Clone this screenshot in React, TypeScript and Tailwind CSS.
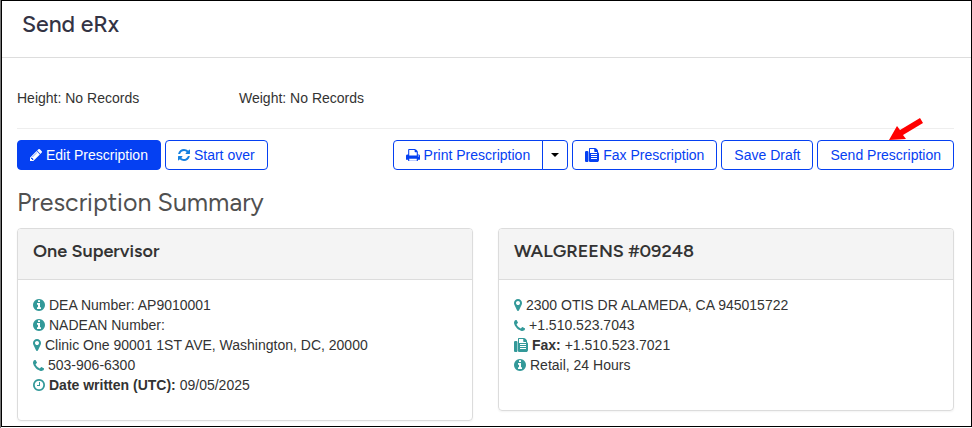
import React from "react";

const ICONS = {
  info: {
    box: "128 128 1536 1536",
    width: "w-3",
    path: "M1152 1376v-160q0-14-9-23t-23-9h-96v-512q0-14-9-23t-23-9h-320q-14 0-23 9t-9 23v160q0 14 9 23t23 9h96v320h-96q-14 0-23 9t-9 23v160q0 14 9 23t23 9h448q14 0 23-9t9-23zm-128-896v-160q0-14-9-23t-23-9h-192q-14 0-23 9t-9 23v160q0 14 9 23t23 9h192q14 0 23-9t9-23zm640 416q0 209-103 385.5t-279.5 279.5-385.5 103-385.5-103-279.5-279.5-103-385.5 103-385.5 279.5-279.5 385.5-103 385.5 103 279.5 279.5 103 385.5z",
  },
  marker: {
    box: "384 128 1024 1536",
    width: "w-2",
    path: "M1152 640q0-106-75-181t-181-75-181 75-75 181 75 181 181 75 181-75 75-181zm256 0q0 109-33 179l-364 774q-16 33-47.5 52t-67.5 19-67.5-19-46.5-52l-365-774q-33-70-33-179 0-212 150-362t362-150 362 150 150 362z",
  },
  phone: {
    box: "192 128 1408 1408",
    width: "w-[11px]",
    path: "M1600 1240q0 27-10 70.5t-21 68.5q-21 50-122 106-94 51-186 51-27 0-53-3.5t-57.5-12.5-47-14.5-55.5-20.5-49-18q-98-35-175-83-127-79-264-216t-216-264q-48-77-83-175-3-9-18-49t-20.5-55.5-14.5-47-12.5-57.5-3.5-53q0-92 51-186 56-101 106-122 25-11 68.5-21t70.5-10q14 0 21 3 18 6 53 76 11 19 30 54t35 63.5 31 53.5q3 4 17.5 25t21.5 35.5 7 28.5q0 20-28.5 50t-62 55-62 53-28.5 46q0 9 5 22.5t8.5 20.5 14 24 11.5 19q76 137 174 235t235 174q2 1 19 11.5t24 14 20.5 8.5 22.5 5q18 0 46-28.5t53-62 55-62 50-28.5q14 0 28.5 7t35.5 21.5 25 17.5q25 15 53.5 31t63.5 35 54 30q70 35 76 53 3 7 3 21z",
  },
  clock: {
    box: "128 128 1536 1536",
    width: "w-3",
    path: "M1024 544v448q0 14-9 23t-23 9h-320q-14 0-23-9t-9-23v-64q0-14 9-23t23-9h224v-352q0-14 9-23t23-9h64q14 0 23 9t9 23zm416 352q0-148-73-273t-198-198-273-73-273 73-198 198-73 273 73 273 198 198 273 73 273-73 198-198 73-273zm224 0q0 209-103 385.5t-279.5 279.5-385.5 103-385.5-103-279.5-279.5-103-385.5 103-385.5 279.5-279.5 385.5-103 385.5 103 279.5 279.5 103 385.5z",
  },
  pencil: {
    box: "128 149 1515 1515",
    width: "w-3",
    path: "M491 1536l91-91-235-235-91 91v107h128v128h107zm523-928q0-22-22-22-10 0-17 7l-542 542q-7 7-7 17 0 22 22 22 10 0 17-7l542-542q7-7 7-17zm-54-192l416 416-832 832h-416v-416zm683 96q0 53-37 90l-166 166-416-416 166-165q36-38 90-38 53 0 91 38l235 234q37 39 37 91z",
  },
  refresh: {
    box: "128 128 1536 1536",
    width: "w-3",
    path: "M1639 1056q0 5-1 7-64 268-268 434.5t-478 166.5q-146 0-282.5-55t-243.5-157l-129 129q-19 19-45 19t-45-19-19-45v-448q0-26 19-45t45-19h448q26 0 45 19t19 45-19 45l-137 137q71 66 161 102t187 36q134 0 250-65t186-179q11-17 53-117 8-23 30-23h192q13 0 22.5 9.5t9.5 22.5zm25-800v448q0 26-19 45t-45 19h-448q-26 0-45-19t-19-45 19-45l138-138q-148-137-349-137-134 0-250 65t-186 179q-11 17-53 117-8 23-30 23h-199q-13 0-22.5-9.5t-9.5-22.5v-7q65-268 270-434.5t480-166.5q146 0 284 55.5t245 156.5l130-129q19-19 45-19t45 19 19 45z",
  },
  print: {
    box: "64 128 1664 1536",
    width: "w-[14px]",
    path: "M448 1536h896v-256h-896v256zm0-640h896v-384h-160q-40 0-68-28t-28-68v-160h-640v640zm1152 64q0-26-19-45t-45-19-45 19-19 45 19 45 45 19 45-19 19-45zm128 0v416q0 13-9.5 22.5t-22.5 9.5h-224v160q0 40-28 68t-68 28h-960q-40 0-68-28t-28-68v-160h-224q-13 0-22.5-9.5t-9.5-22.5v-416q0-79 56.5-135.5t135.5-56.5h64v-544q0-40 28-68t68-28h672q40 0 88 20t76 48l152 152q28 28 48 76t20 88v256h64q79 0 135.5 56.5t56.5 135.5z",
  },
  fax: {
    box: "0 0 1792 1792",
    width: "w-[14px]",
    path: "M160 384h128q66 0 113 47t47 113v1088q0 66-47 113t-113 47h-128q-66 0-113-47t-47-113v-1088q0-66 47-113t113-47zM1664 547q58 34 93 93t35 128v768q0 106-75 181t-181 75h-864q-66 0-113-47t-47-113v-1536q0-40 28-68t68-28h672q40 0 88 20t76 48l152 152q28 28 48 76t20 88v163zM640 128v512h896v-128h-256q-40 0-68-28t-28-68v-288zM768 768v128h768v-128zM768 1024v128h768v-128zM768 1280v128h768v-128z",
  },
};

type IconName = keyof typeof ICONS;

function Icon({ name }: { name: IconName }) {
  const icon = ICONS[name];
  return (
    <svg
      viewBox={icon.box}
      fill="currentColor"
      fillRule={name === "fax" ? "evenodd" : "nonzero"}
      className={`${icon.width} shrink-0`}
      aria-hidden="true"
    >
      <path d={icon.path} />
    </svg>
  );
}

const BUTTON =
  "flex h-[30px] items-center gap-1 rounded border border-[#0540f2] px-3 text-sm whitespace-nowrap";

const OUTLINE = `${BUTTON} bg-white text-[#0540f2]`;

type Line = { icon: IconName; label?: string; text: string };

const SUPERVISOR: Line[] = [
  { icon: "info", text: "DEA Number: AP9010001" },
  { icon: "info", text: "NADEAN Number:" },
  { icon: "marker", text: "Clinic One 90001 1ST AVE, Washington, DC, 20000" },
  { icon: "phone", text: "503-906-6300" },
  { icon: "clock", label: "Date written (UTC):", text: "09/05/2025" },
];

const PHARMACY: Line[] = [
  { icon: "marker", text: "2300 OTIS DR ALAMEDA, CA 945015722" },
  { icon: "phone", text: "+1.510.523.7043" },
  { icon: "fax", label: "Fax:", text: "+1.510.523.7021" },
  { icon: "info", text: "Retail, 24 Hours" },
];

function Card({ title, lines, bottom }: { title: string; lines: Line[]; bottom: string }) {
  return (
    <section className="overflow-hidden rounded border border-[#dcdcdc] shadow-xs">
      <h3 className="border-b border-[#dcdcdc] bg-[#f4f4f4] px-[15px] pt-[10px] pb-4 font-[Figtree,Inter,sans-serif] text-lg leading-6 font-semibold">
        {title}
      </h3>
      <ul className={`px-[15px] pt-[15px] ${bottom}`}>
        {lines.map((line) => (
          <li key={line.text} className="flex items-center gap-1 leading-5">
            <span className="text-[#339999]">
              <Icon name={line.icon} />
            </span>
            <span>
              {line.label && <b>{line.label} </b>}
              {line.text}
            </span>
          </li>
        ))}
      </ul>
    </section>
  );
}

export default function App() {
  return (
    <div className="border-l border-[#777777] bg-white pb-px font-['Liberation_Sans',Arial,sans-serif] text-sm text-[#333333]">
      <main className="border border-black">
        <header className="border-b border-[#dddddd] px-5 pt-[7px] pb-[17px]">
          <h1 className="font-[Figtree,Inter,sans-serif] text-[23px] leading-8 font-medium text-[#333344]">
            Send eRx
          </h1>
        </header>

        <div className="pt-[30px] pr-[17px] pb-[5px] pl-[15px]">
          {/* Vitals */}
          <div className="flex border-b border-[#eeeeee] pb-5 leading-5">
            <p className="w-[222px]">Height: No Records</p>
            <p>Weight: No Records</p>
          </div>

          {/* Actions */}
          <div className="mt-[11px] flex flex-wrap justify-between gap-1">
            <div className="flex gap-1">
              <button type="button" className={`${BUTTON} bg-[#0540f2] text-white`}>
                <Icon name="pencil" />
                Edit Prescription
              </button>
              <button type="button" className={OUTLINE}>
                <span className="text-[#1480e0]">
                  <Icon name="refresh" />
                </span>
                Start over
              </button>
            </div>
            <div className="flex gap-1">
              <div className="flex">
                <button type="button" className={`${OUTLINE} rounded-r-none`}>
                  <Icon name="print" />
                  Print Prescription
                </button>
                <button
                  type="button"
                  aria-label="More print options"
                  className="-ml-px flex items-center rounded-r border border-[#0540f2] px-2 text-black"
                >
                  <svg viewBox="0 0 8 4" className="w-2" fill="currentColor" aria-hidden="true">
                    <path d="M0 0h8L4 4z" />
                  </svg>
                </button>
              </div>
              <button type="button" className={OUTLINE}>
                <Icon name="fax" />
                Fax Prescription
              </button>
              <button type="button" className={OUTLINE}>
                Save Draft
              </button>
              <div className="relative">
                <button type="button" className={OUTLINE}>
                  Send Prescription
                </button>
                <svg
                  viewBox="0 0 34 22"
                  className="absolute right-[31px] bottom-[30px] w-[34px]"
                  fill="#ff0000"
                  aria-hidden="true"
                >
                  <path d="M0 22L8 8L11 12L31 0L34 5L14 17L17 21Z" />
                </svg>
              </div>
            </div>
          </div>

          <h2 className="mt-4 font-[Figtree,Inter,sans-serif] text-[25px] leading-8 text-[#505050]">
            Prescription Summary
          </h2>

          <div className="mt-[10px] grid grid-cols-2 items-start gap-[25px]">
            <Card title="One Supervisor" lines={SUPERVISOR} bottom="pb-[25px]" />
            <Card title="WALGREENS #09248" lines={PHARMACY} bottom="pb-[35px]" />
          </div>
        </div>
      </main>
    </div>
  );
}
